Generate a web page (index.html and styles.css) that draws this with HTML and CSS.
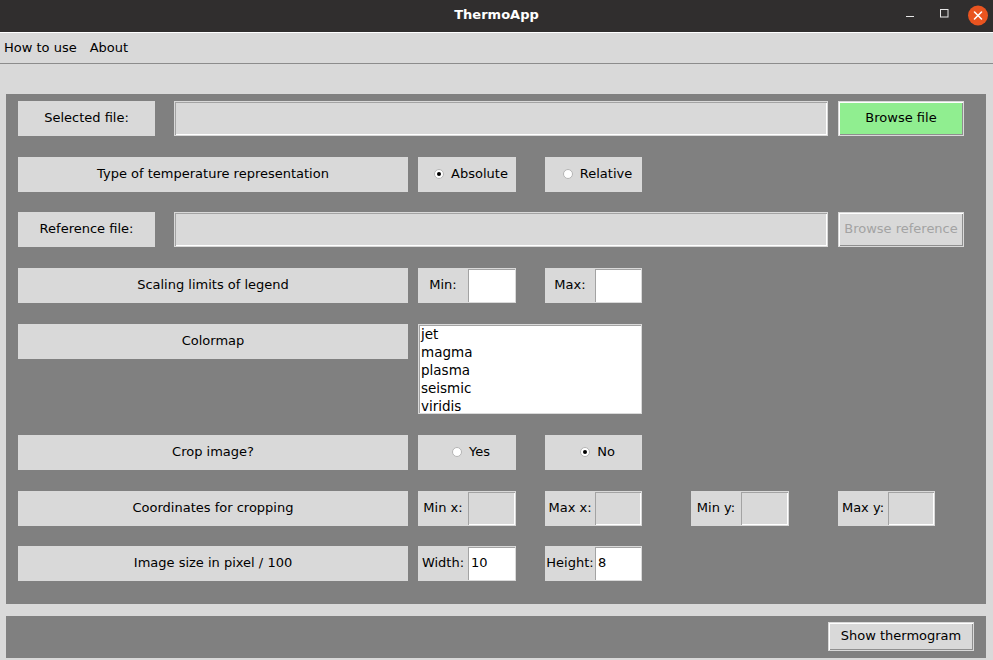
FILE: index.html
```html
<!DOCTYPE html>
<html>
<head>
<meta charset="utf-8">
<title>ThermoApp</title>
<link rel="stylesheet" href="styles.css">
</head>
<body>
<div class="window">
  <header class="titlebar">
    <div></div>
    <div class="title">ThermoApp</div>
    <div class="controls">
      <svg width="93" height="32" viewBox="0 0 93 32">
        <line x1="6" y1="16.5" x2="14" y2="16.5" stroke="#e6e6e6" stroke-width="1"/>
        <rect x="40.5" y="9.5" width="7.5" height="7.5" fill="none" stroke="#e6e6e6" stroke-width="1"/>
        <circle cx="78" cy="15.5" r="10" fill="#e95420"/>
        <path d="M74.5 12 L81.5 19 M81.5 12 L74.5 19" stroke="#ffffff" stroke-width="1.6" stroke-linecap="round"/>
      </svg>
    </div>
  </header>

  <nav class="menubar">
    <span class="menu-item first">How to use</span>
    <span class="menu-item">About</span>
  </nav>

  <main class="panel form">
    <!-- row 1 -->
    <div class="cell label c-a">Selected file:</div>
    <div class="cell entry readonly c-entry"></div>
    <div class="cell button green c-btn">Browse file</div>

    <!-- row 2 -->
    <div class="cell label c-wide">Type of temperature representation</div>
    <div class="cell radio c-e"><span class="ind on"></span>Absolute</div>
    <div class="cell radio c-g"><span class="ind"></span>Relative</div>

    <!-- row 3 -->
    <div class="cell label c-a">Reference file:</div>
    <div class="cell entry readonly c-entry"></div>
    <div class="cell button disabled c-btn">Browse reference</div>

    <!-- row 4 -->
    <div class="cell label c-wide">Scaling limits of legend</div>
    <div class="cell field c-e"><span class="lab">Min:</span><span class="entry small"></span></div>
    <div class="cell field c-g"><span class="lab">Max:</span><span class="entry small"></span></div>

    <!-- row 5 -->
    <div class="cell label c-wide">Colormap</div>
    <ul class="cell listbox entry c-list">
      <li>jet</li>
      <li>magma</li>
      <li>plasma</li>
      <li>seismic</li>
      <li>viridis</li>
    </ul>

    <!-- row 6 -->
    <div class="cell label c-wide">Crop image?</div>
    <div class="cell radio c-e"><span class="ind"></span>Yes</div>
    <div class="cell radio c-g"><span class="ind on"></span>No</div>

    <!-- row 7 -->
    <div class="cell label c-wide">Coordinates for cropping</div>
    <div class="cell field c-e"><span class="lab">Min x:</span><span class="entry small readonly"></span></div>
    <div class="cell field c-g"><span class="lab">Max x:</span><span class="entry small readonly"></span></div>
    <div class="cell field c-i"><span class="lab">Min y:</span><span class="entry small readonly"></span></div>
    <div class="cell field c-k"><span class="lab">Max y:</span><span class="entry small readonly"></span></div>

    <!-- row 8 -->
    <div class="cell label c-wide">Image size in pixel / 100</div>
    <div class="cell field c-e"><span class="lab">Width:</span><span class="entry small">10</span></div>
    <div class="cell field c-g"><span class="lab">Height:</span><span class="entry small">8</span></div>
  </main>

  <footer class="panel actions">
    <div class="button show">Show thermogram</div>
  </footer>
</div>
</body>
</html>
```

FILE: styles.css
```css
* { box-sizing: border-box; }

html, body {
  margin: 0;
  padding: 0;
}

body {
  width: 993px;
  height: 660px;
  overflow: hidden;
  background: #d9d9d9;
  font-family: "DejaVu Sans", sans-serif;
  font-size: 13px;
  color: #000;
}

.window {
  width: 993px;
  height: 660px;
}

/* title bar */
.titlebar {
  height: 32px;
  background: #302e2e;
  display: grid;
  grid-template-columns: 1fr auto 1fr;
  align-items: center;
}

.title {
  color: #ffffff;
  font-weight: bold;
  font-size: 13px;
  padding-bottom: 3px;
}

.controls {
  justify-self: end;
  height: 32px;
}

.controls svg { display: block; }

/* menu bar */
.menubar {
  height: 32px;
  border-top: 1px solid #ffffff;
  border-bottom: 1px solid #8c8c8c;
  display: flex;
  align-items: center;
  gap: 13px;
  padding-left: 4px;
  padding-bottom: 2px;
}

/* panels */
.panel {
  background: #808080;
  margin-left: 6px;
  width: 980px;
}

.form {
  margin-top: 30px;
  padding: 7px 0 23px 12px;
  display: grid;
  grid-template-columns: 137px 19px 234px 10px 98px 29px 97px 49px 98px 49px 97px 29px;
  grid-template-rows: 56px 55px 56px 56px 111px 56px 55px 35px;
  align-items: start;
}

.actions {
  margin-top: 12px;
  height: 42px;
  display: flex;
  justify-content: flex-end;
  align-items: flex-start;
  padding: 6px 12px 0 0;
}

/* grid placement */
.c-a { grid-column: 1 / 2; }
.c-wide { grid-column: 1 / 4; }
.c-entry { grid-column: 3 / 11; margin-right: 10px; }
.c-btn { grid-column: 11 / 13; }
.c-e { grid-column: 5 / 6; }
.c-g { grid-column: 7 / 8; }
.c-i { grid-column: 9 / 10; }
.c-k { grid-column: 11 / 12; }
.c-list { grid-column: 5 / 8; }

.cell { height: 35px; }

.label {
  background: #d9d9d9;
  display: flex;
  align-items: center;
  justify-content: center;
  white-space: nowrap;
  padding-bottom: 2px;
}

/* entries */
.entry {
  display: block;
  background: #ffffff;
  border: 1px solid #d9d9d9;
  box-shadow: inset 1px 1px 0 #a3a3a3, inset -1px -1px 0 #ffffff;
}

.entry.readonly {
  background: #d9d9d9;
}

.field {
  background: #d9d9d9;
  display: flex;
}

.field .lab {
  width: 50px;
  flex: none;
  display: flex;
  align-items: center;
  justify-content: center;
  white-space: nowrap;
  padding-bottom: 2px;
}

.field .entry.small {
  flex: 1;
  height: 35px;
  margin-left: -1px;
  padding: 0 3px;
  line-height: 31px;
}

/* buttons */
.button {
  display: flex;
  align-items: center;
  justify-content: center;
  background: #d9d9d9;
  border: 1px solid #d9d9d9;
  box-shadow: inset 1px 1px 0 #ffffff, inset -1px -1px 0 #8f8f8f;
  white-space: nowrap;
  padding-bottom: 2px;
}

.button.green {
  background: #90ee90;
}

.button.disabled {
  color: #a3a3a3;
}

.button.show {
  width: 146px;
  height: 29px;
}

/* radio buttons */
.radio {
  background: #d9d9d9;
  display: flex;
  align-items: center;
  justify-content: center;
  padding-left: 8px;
  padding-bottom: 2px;
}

.ind {
  width: 10px;
  height: 10px;
  border-radius: 50%;
  background: #ffffff;
  border: 1px solid #b5b5b5;
  margin-right: 7px;
  margin-top: 1px;
  display: flex;
  align-items: center;
  justify-content: center;
}

.ind.on::after {
  content: "";
  width: 4px;
  height: 4px;
  border-radius: 50%;
  background: #000;
}

/* listbox */
.listbox {
  height: 90px;
  margin: 0;
  padding: 0 1px 0 2px;
  list-style: none;
  background: #ffffff;
  overflow: hidden;
}

.listbox li {
  line-height: 18px;
  height: 18px;
  font-size: 13.5px;
}
```
